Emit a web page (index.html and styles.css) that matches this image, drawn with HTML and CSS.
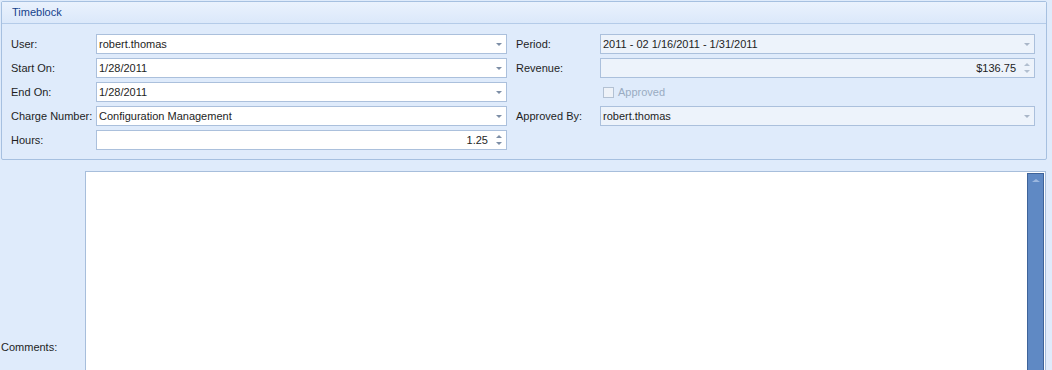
FILE: index.html
```html
<!DOCTYPE html>
<html>
<head>
<meta charset="utf-8">
<link rel="stylesheet" href="styles.css">
</head>
<body>
<div class="group">
  <div class="group-head">Timeblock</div>
  <div class="group-body">
    <div class="col">
      <div class="row"><label>User:</label><div class="field"><span class="val">robert.thomas</span><span class="drop"></span></div></div>
      <div class="row"><label>Start On:</label><div class="field"><span class="val">1/28/2011</span><span class="drop"></span></div></div>
      <div class="row"><label>End On:</label><div class="field"><span class="val">1/28/2011</span><span class="drop"></span></div></div>
      <div class="row"><label>Charge Number:</label><div class="field"><span class="val">Configuration Management</span><span class="drop"></span></div></div>
      <div class="row"><label>Hours:</label><div class="field"><span class="val right">1.25</span><span class="spin"><i class="up"></i><i class="down"></i></span></div></div>
    </div>
    <div class="col col-r">
      <div class="row"><label>Period:</label><div class="field dis"><span class="val">2011 - 02 1/16/2011 - 1/31/2011</span><span class="drop"></span></div></div>
      <div class="row"><label>Revenue:</label><div class="field dis"><span class="val right">$136.75</span><span class="spin"><i class="up"></i><i class="down"></i></span></div></div>
      <div class="row"><label></label><div class="check"><span class="box"></span>Approved</div></div>
      <div class="row"><label>Approved By:</label><div class="field dis"><span class="val">robert.thomas</span><span class="drop"></span></div></div>
    </div>
  </div>
</div>
<div class="comments">
  <label class="clabel">Comments:</label>
  <div class="memo"><div class="sb"><span class="sbarrow"></span></div></div>
</div>
</body>
</html>
```
FILE: styles.css
```css
html, body {
  margin: 0;
  padding: 0;
  background: #dfebfb;
  font-family: "Liberation Sans", Arial, sans-serif;
  font-size: 11px;
  color: #1e1e1e;
  width: 1052px;
  height: 370px;
  overflow: hidden;
}
.group {
  margin: 1px 5px 0 1px;
  border: 1px solid #a6c0e0;
  border-radius: 2px;
  background: #dfebfb;
}
.group-head {
  height: 21px;
  line-height: 21px;
  padding-left: 10px;
  color: #15428b;
  background: linear-gradient(#eaf2fd, #dbe8fa);
  border-bottom: 1px solid #b4cbe8;
}
.group-body {
  display: flex;
  gap: 9px;
  padding: 10px 0 9px 9px;
}
.col {
  display: flex;
  flex-direction: column;
  gap: 4px;
}
.row {
  display: flex;
  align-items: center;
  height: 20px;
}
.row label {
  width: 85px;
  flex: none;
}
.col-r .row label {
  width: 84px;
}
.field {
  width: 411px;
  height: 20px;
  box-sizing: border-box;
  border: 1px solid #abc0dc;
  background: #ffffff;
  display: flex;
  align-items: center;
}
.col-r .field {
  width: 435px;
}
.field.dis {
  background: #edf3fb;
}
.val {
  flex: 1;
  padding-left: 2px;
  white-space: nowrap;
}
.val.right {
  text-align: right;
  padding-right: 4px;
}
.drop {
  width: 14px;
  height: 18px;
  position: relative;
  flex: none;
}
.drop::after {
  content: "";
  position: absolute;
  left: 4px;
  top: 8px;
  border-left: 3px solid transparent;
  border-right: 3px solid transparent;
  border-top: 3px solid #7d8ea6;
}
.field.dis .drop::after {
  border-top-color: #a9b6c8;
}
.spin {
  width: 14px;
  height: 18px;
  position: relative;
  flex: none;
}
.spin i {
  position: absolute;
  left: 4px;
  border-left: 3px solid transparent;
  border-right: 3px solid transparent;
}
.spin .up {
  top: 4px;
  border-bottom: 3px solid #7d8ea6;
}
.spin .down {
  top: 11px;
  border-top: 3px solid #7d8ea6;
}
.field.dis .spin .up { border-bottom-color: #b2bfd0; }
.field.dis .spin .down { border-top-color: #b2bfd0; }
.check {
  display: flex;
  align-items: center;
  gap: 4px;
  color: #9aabc2;
  padding-left: 3px;
}
.box {
  width: 9px;
  height: 9px;
  border: 1px solid #b3c1d3;
  background: #eef2f8;
}
.comments {
  display: flex;
  align-items: flex-start;
  margin-top: 11px;
  height: 199px;
}
.clabel {
  width: 85px;
  flex: none;
  align-self: flex-end;
  margin-bottom: 17px;
  padding-left: 1px;
  box-sizing: border-box;
}
.memo {
  width: 961px;
  height: 210px;
  flex: none;
  box-sizing: border-box;
  border: 1px solid #a7bedb;
  background: #ffffff;
  display: flex;
  justify-content: flex-end;
  padding: 1px 1px 0 0;
}
.sb {
  width: 17px;
  height: 200px;
  box-sizing: border-box;
  border: 1px solid #3e6399;
  background: #5f89c4;
  position: relative;
}
.sbarrow {
  position: absolute;
  left: 4px;
  top: 5px;
  border-left: 4px solid transparent;
  border-right: 4px solid transparent;
  border-bottom: 3px solid #9bb7df;
}
```
